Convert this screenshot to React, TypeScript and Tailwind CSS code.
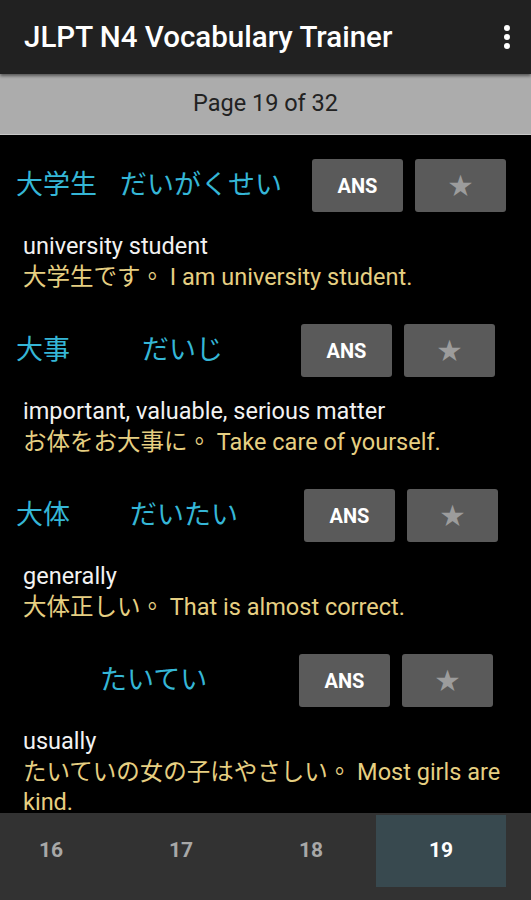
import React from "react";

type Row = {
  kanji: string;
  reading: string;
  meaning: string;
  example: string;
  kanjiW: string;
  btnPad: string;
};

const rows: Row[] = [
  {
    kanji: "大学生",
    reading: "だいがくせい",
    meaning: "university student",
    example: "大学生です。 I am university student.",
    kanjiW: "w-[104px]",
    btnPad: "pr-[25px]",
  },
  {
    kanji: "大事",
    reading: "だいじ",
    meaning: "important, valuable, serious matter",
    example: "お体をお大事に。 Take care of yourself.",
    kanjiW: "w-[126px]",
    btnPad: "pr-[36px]",
  },
  {
    kanji: "大体",
    reading: "だいたい",
    meaning: "generally",
    example: "大体正しい。 That is almost correct.",
    kanjiW: "w-[114px]",
    btnPad: "pr-[33px]",
  },
  {
    kanji: "",
    reading: "たいてい",
    meaning: "usually",
    example: "たいていの女の子はやさしい。 Most girls are kind.",
    kanjiW: "w-[84px]",
    btnPad: "pr-[38px]",
  },
];

const font = { fontFamily: "Roboto, 'Noto Sans CJK JP', sans-serif" };
const exFont = { fontFamily: "Roboto, 'Noto Sans CJK TC', 'Noto Sans CJK JP', sans-serif" };

function WordRow({ r }: { r: Row }) {
  return (
    <div className="h-[165px] shrink-0 flex flex-col">
      <div className={`flex items-center h-[53px] mt-[10px] pl-[16px] ${r.btnPad}`}>
        <span className={`${r.kanjiW} shrink-0 text-[27px] leading-none text-[#35b6d6]`}>{r.kanji}</span>
        <span className="text-[27px] leading-none text-[#35b6d6] whitespace-nowrap">{r.reading}</span>
        <div className="ml-auto flex gap-[12px]">
          <div className="w-[91px] h-[53px] rounded-[3px] bg-[#5a5a5a] flex items-center justify-center text-white font-bold text-[20px]">
            ANS
          </div>
          <div className="w-[91px] h-[53px] rounded-[3px] bg-[#5a5a5a] flex items-center justify-center text-[#9c9c9c] text-[24px]">
            ★
          </div>
        </div>
      </div>
      <div className="pl-[23px] pr-[22px] mt-[18px]">
        <div className="text-[23.5px] leading-[32px] text-[#f2f2f2]">{r.meaning}</div>
        <div lang="zh-Hant" className="text-[23.5px] leading-[30px] text-[#e6cf82]" style={exFont}>
          {r.example}
        </div>
      </div>
    </div>
  );
}

export default function App() {
  return (
    <div className="w-[531px] h-[900px] bg-black flex flex-col overflow-hidden" style={font}>
      <div className="h-[74px] shrink-0 bg-[#212121] flex items-center pl-[24px] pr-[20px] shadow-[0_2px_3px_rgba(0,0,0,0.5)] relative z-10">
        <span className="text-white text-[29.5px] font-medium">JLPT N4 Vocabulary Trainer</span>
        <svg className="ml-auto" width="8" height="26" viewBox="0 0 8 26">
          <circle cx="4" cy="4" r="3" fill="#fff" />
          <circle cx="4" cy="13" r="3" fill="#fff" />
          <circle cx="4" cy="22" r="3" fill="#fff" />
        </svg>
      </div>
      <div className="h-[61px] shrink-0 bg-[#acacac] flex items-center justify-center border-b border-[#c8c8c8]">
        <span className="text-[#222] text-[23.5px]">Page 19 of 32</span>
      </div>
      <div className="flex-1 overflow-hidden pt-[14px]">
        {rows.map((r, i) => (
          <WordRow key={i} r={r} />
        ))}
      </div>
      <div className="h-[87px] shrink-0 bg-[#323232] flex overflow-hidden">
        <div className="flex ml-[-14px] h-[72px] mt-[2px]">
          {["16", "17", "18", "19"].map((t) => (
            <div
              key={t}
              className={
                t === "19"
                  ? "w-[130px] h-full flex items-center justify-center bg-[#38494f] text-white font-bold text-[21px]"
                  : "w-[130px] h-full flex items-center justify-center text-[#a8a8a8] font-bold text-[21px]"
              }
            >
              {t}
            </div>
          ))}
        </div>
      </div>
    </div>
  );
}
